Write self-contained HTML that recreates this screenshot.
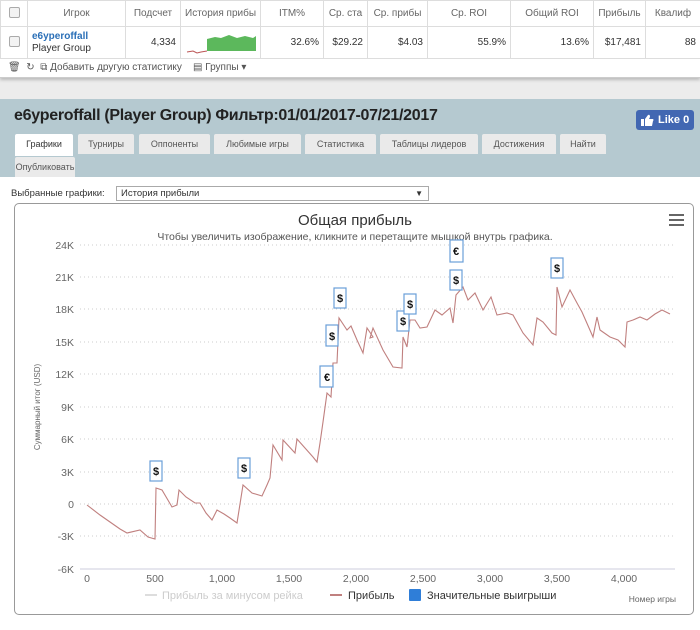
<!DOCTYPE html>
<html><head><meta charset="utf-8"><style>
*{box-sizing:border-box;margin:0;padding:0}
body{width:700px;height:630px;background:#ececec;font-family:"Liberation Sans","DejaVu Sans",sans-serif;position:relative;overflow:hidden;color:#333}
.card{position:absolute;left:0;top:0;width:700px;height:78px;background:#fff;box-shadow:0 2px 3px #bbb;border-bottom:1px solid #ccc}
table{border-collapse:collapse;font-size:10px;position:absolute;left:0;top:0;table-layout:fixed;width:700px}
td{border:1px solid #ddd;height:26px;padding:0 4px;white-space:nowrap;overflow:hidden}
tr.h td{height:26px;color:#666;text-align:center;background:#fff}
tr.r td{text-align:right;height:28px}
.cb{display:inline-block;width:11px;height:11px;border:1px solid #aaa;border-radius:2px;background:#f3f3f3}
.tb{position:absolute;left:8px;top:62px;font-size:10px;color:#555}
.panel{position:absolute;left:0;top:99px;width:700px;height:531px;background:#fff}
.hd{position:absolute;left:0;top:0;width:700px;height:78px;background:#b5c9d0}
.title{position:absolute;left:14px;top:8px;font-size:16px;font-weight:bold;color:#222;letter-spacing:-0.3px}
.tab{position:absolute;height:20px;background:#eaeaea;font-size:9px;color:#555;text-align:center;line-height:20px;border-radius:2px 2px 0 0;white-space:nowrap}
.like{position:absolute;left:636px;top:11px;width:58px;height:20px;background:#4267b2;color:#fff;font-size:11px;font-weight:bold;border-radius:3px;line-height:20px;padding-left:22px}
.sel{position:absolute;left:11px;top:89px;font-size:9.5px;color:#333}
.selbox{position:absolute;left:116px;top:87px;width:313px;height:15px;border:1px solid #aaa;font-size:9.5px;padding-left:4px;line-height:13px}
.chart{position:absolute;left:14px;top:203px;width:680px;height:412px;border:1px solid #999;border-radius:5px;background:#fff}
</style></head><body>
<div class="card">
<table>
<tr class="h"><td style="width:27px"><span class="cb"></span></td><td style="width:98px">Игрок</td><td style="width:55px">Подсчет</td><td style="width:80px">История прибы</td><td style="width:63px">ITM%</td><td style="width:44px">Ср. ста</td><td style="width:60px">Ср. прибы</td><td style="width:83px">Ср. ROI</td><td style="width:83px">Общий ROI</td><td style="width:52px">Прибыль</td><td style="width:55px">Квалиф</td></tr>
<tr class="r"><td style="text-align:center"><span class="cb"></span></td><td style="text-align:left;line-height:12px"><b style="color:#2a6fb7">e6yperoffall</b><br>Player Group</td><td>4,334</td><td style="padding:0"><svg width="80" height="28"><polygon points="26,24 26,12 34,10 40,11 48,8 56,11 64,9 72,11 75,9 75,24" fill="#5cb85c"/><polyline points="6,25 12,24 16,26 20,25 26,24" stroke="#b55" fill="none"/></svg></td><td>32.6%</td><td>$29.22</td><td>$4.03</td><td>55.9%</td><td>13.6%</td><td>$17,481</td><td>88</td></tr>
</table>
<div class="tb">🗑 &nbsp;↻ &nbsp;⧉ Добавить другую статистику &nbsp;&nbsp; ▤ Группы ▾</div>
</div>
<div class="panel">
<div class="hd">
<div class="title">e6yperoffall (Player Group) Фильтр:01/01/2017-07/21/2017</div>
<div class="like">Like 0<svg style="position:absolute;left:5px;top:4px" width="13" height="12"><rect x="0" y="5" width="3" height="7" fill="#fff"/><path d="M4 5 L7 1 Q9 0 9 3 L8 5 L12 5 Q13 6 12 7 L11 12 L4 12Z" fill="#fff"/></svg></div>
<div class="tab" style="left:15px;top:35px;width:58px;background:#fff;color:#333;height:22px">Графики</div>
<div class="tab" style="left:78px;top:35px;width:56px">Турниры</div>
<div class="tab" style="left:139px;top:35px;width:71px">Оппоненты</div>
<div class="tab" style="left:214px;top:35px;width:87px">Любимые игры</div>
<div class="tab" style="left:305px;top:35px;width:71px">Статистика</div>
<div class="tab" style="left:380px;top:35px;width:98px">Таблицы лидеров</div>
<div class="tab" style="left:482px;top:35px;width:74px">Достижения</div>
<div class="tab" style="left:560px;top:35px;width:46px">Найти</div>
<div class="tab" style="left:15px;top:58px;width:60px">Опубликовать</div>
</div>
<div class="sel">Выбранные графики:</div>
<div class="selbox">История прибыли<span style="position:absolute;right:5px;font-size:8px">▼</span></div>
</div>
<div class="chart"></div>
<svg style="position:absolute;left:0;top:0" width="700" height="630" font-family="Liberation Sans, DejaVu Sans, sans-serif">
<text x="355" y="225" font-size="15" text-anchor="middle" fill="#333">Общая прибыль</text>
<text x="355" y="240" font-size="10.5" text-anchor="middle" fill="#555">Чтобы увеличить изображение, кликните и перетащите мышкой внутрь графика.</text>
<g fill="#666" stroke="#666" stroke-width="2"><line x1="669" y1="215" x2="684" y2="215"/><line x1="669" y1="220" x2="684" y2="220"/><line x1="669" y1="225" x2="684" y2="225"/></g>
<g stroke="#ccc" stroke-dasharray="1,3">
<line x1="80" x2="675" y1="245" y2="245"/><line x1="80" x2="675" y1="277" y2="277"/><line x1="80" x2="675" y1="309" y2="309"/><line x1="80" x2="675" y1="342" y2="342"/><line x1="80" x2="675" y1="374" y2="374"/><line x1="80" x2="675" y1="407" y2="407"/><line x1="80" x2="675" y1="439" y2="439"/><line x1="80" x2="675" y1="472" y2="472"/><line x1="80" x2="675" y1="504" y2="504"/><line x1="80" x2="675" y1="536" y2="536"/></g>
<line x1="80" x2="675" y1="569" y2="569" stroke="#ccd"/>
<g font-size="10.5" fill="#666" text-anchor="end">
<text x="74" y="249">24K</text><text x="74" y="281">21K</text><text x="74" y="313">18K</text><text x="74" y="346">15K</text><text x="74" y="378">12K</text><text x="74" y="411">9K</text><text x="74" y="443">6K</text><text x="74" y="476">3K</text><text x="74" y="508">0</text><text x="74" y="540">-3K</text><text x="74" y="573">-6K</text></g>
<g font-size="10.5" fill="#666" text-anchor="middle">
<text x="87" y="582">0</text><text x="155" y="582">500</text><text x="222" y="582">1,000</text><text x="289" y="582">1,500</text><text x="356" y="582">2,000</text><text x="423" y="582">2,500</text><text x="490" y="582">3,000</text><text x="557" y="582">3,500</text><text x="624" y="582">4,000</text></g>
<text x="40" y="407" font-size="8" fill="#666" text-anchor="middle" transform="rotate(-90 40 407)">Суммарный итог (USD)</text>
<polyline fill="none" stroke="#c0807f" stroke-width="1.1" points="87,505 100,515 110,522 120,529 127,533 140,530 148,537 155,539 156,488 162,490 172,507 177,505 179,490 186,497 195,503 200,503 206,513 212,520 217,510 224,514 230,518 237,523 243,485 252,493 262,496 267,485 270,478 273,445 282,460 283,440 295,453 297,439 305,448 313,457 317,462 320,443 323,422 327,393 331,397 333,363 337,363 339,318 347,330 351,326 357,340 363,353 367,328 373,337 370,338 373,328 383,350 393,367 402,368 403,337 407,347 410,320 415,320 420,328 427,327 435,310 442,315 450,308 453,323 456,295 463,287 468,300 475,293 483,310 491,297 497,315 507,313 513,315 523,333 533,345 537,318 543,322 552,333 556,335 557,287 562,307 570,290 577,303 582,312 593,337 597,317 600,330 610,337 618,340 625,347 627,322 633,320 640,317 647,320 655,314 662,310 670,314"/>
<g fill="#fff" stroke="#6a9fd8" stroke-width="1.2">
<rect x="150" y="461" width="12" height="20"/><rect x="238" y="458" width="12" height="20"/><rect x="320" y="366" width="13" height="21"/><rect x="326" y="325" width="12" height="21"/><rect x="334" y="288" width="12" height="20"/><rect x="397" y="311" width="12" height="20"/><rect x="404" y="294" width="12" height="20"/><rect x="450" y="270" width="12" height="20"/><rect x="450" y="240" width="13" height="22"/><rect x="551" y="258" width="12" height="20"/></g>
<g font-size="11" font-weight="bold" fill="#111" text-anchor="middle">
<text x="156" y="475">$</text><text x="244" y="472">$</text><text x="327" y="381">€</text><text x="332" y="340">$</text><text x="340" y="302">$</text><text x="403" y="325">$</text><text x="410" y="308">$</text><text x="456" y="284">$</text><text x="456" y="255">€</text><text x="557" y="272">$</text></g>
<line x1="145" x2="157" y1="595" y2="595" stroke="#ddd" stroke-width="2"/>
<text x="162" y="599" font-size="11" fill="#ccc">Прибыль за минусом рейка</text>
<line x1="330" x2="342" y1="595" y2="595" stroke="#c0807f" stroke-width="2"/>
<text x="348" y="599" font-size="11" fill="#333">Прибыль</text>
<rect x="409" y="589" width="12" height="12" fill="#2f7ed8" rx="1"/>
<text x="427" y="599" font-size="11" fill="#333">Значительные выигрыши</text>
<text x="676" y="602" font-size="8.5" fill="#666" text-anchor="end">Номер игры</text>
</svg>
</body></html>
